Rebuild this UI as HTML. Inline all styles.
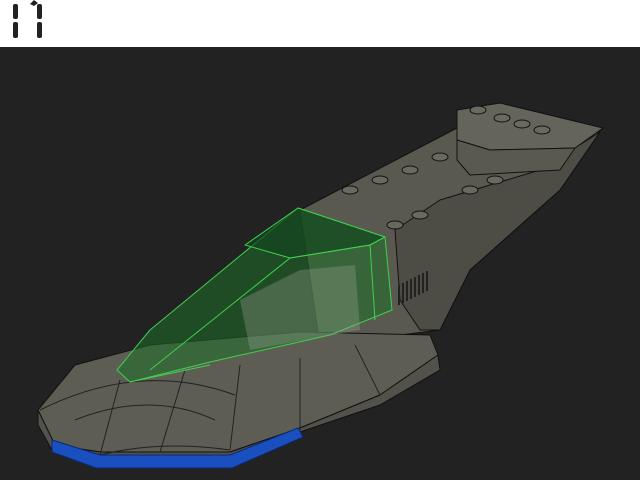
<!DOCTYPE html>
<html><head><style>
html,body{margin:0;padding:0;width:640px;height:480px;overflow:hidden;background:#222}
.top{position:absolute;left:0;top:0;width:640px;height:47px;background:#fff}
</style></head><body>
<div class="top">
<svg width="60" height="47" style="position:absolute;left:0;top:0">
<g fill="#222">
<rect x="13" y="4" width="5" height="15" rx="2"/>
<rect x="13" y="22" width="5" height="16" rx="2"/>
<rect x="37" y="4" width="5" height="15" rx="2"/>
<rect x="37" y="22" width="5" height="16" rx="2"/>
<polygon points="30,4 34,0 38,3 34,6"/>
</g></svg>
</div>
<svg width="640" height="480" style="position:absolute;left:0;top:0">
<g stroke="#111" stroke-width="1" stroke-linejoin="round">
<!-- rear hull -->
<polygon fill="#5a5950" points="300,210 457,128 600,132 560,190 470,270 440,330 320,345"/>
<polygon fill="#4e4d45" points="440,200 540,170 600,132 560,190 470,270 440,330 420,330 400,300 395,230"/>
<!-- rear block -->
<polygon fill="#65645b" points="457,110 500,103 603,128 575,148 490,150 457,140"/>
<polygon fill="#5a5950" points="457,140 490,150 575,148 560,170 470,175 457,160"/>
<!-- studs -->
<g fill="#6a695f">
<ellipse cx="478" cy="110" rx="8" ry="4"/><ellipse cx="502" cy="118" rx="8" ry="4"/>
<ellipse cx="522" cy="124" rx="8" ry="4"/><ellipse cx="542" cy="130" rx="8" ry="4"/>
<ellipse cx="440" cy="157" rx="8" ry="4"/><ellipse cx="410" cy="170" rx="8" ry="4"/>
<ellipse cx="380" cy="180" rx="8" ry="4"/><ellipse cx="350" cy="190" rx="8" ry="4"/>
<ellipse cx="495" cy="180" rx="8" ry="4"/><ellipse cx="470" cy="190" rx="8" ry="4"/>
<ellipse cx="420" cy="215" rx="8" ry="4"/><ellipse cx="395" cy="225" rx="8" ry="4"/>
<ellipse cx="330" cy="345" rx="8" ry="4"/><ellipse cx="300" cy="352" rx="8" ry="4"/>
</g>
<!-- front disk -->
<polygon fill="#5e5d54" points="38,410 75,365 150,345 300,332 430,335 438,355 380,395 300,428 230,452 100,452 55,445"/>
<polygon fill="#52514a" points="38,410 55,445 100,452 230,452 300,428 380,395 438,355 440,370 380,405 300,432 228,462 98,462 52,450 38,425"/>
<g fill="none" stroke="#222">
<path d="M40,410 Q140,360 235,395 M75,420 Q150,390 215,420 M120,380 L100,455 M185,370 L160,452 M240,365 L230,450 M300,358 L300,430 M355,345 L380,395 M100,455 Q160,440 230,450"/>
</g>
<!-- blue underside -->
<polygon fill="#1a4fc0" stroke="#0a2a70" points="52,440 100,455 230,455 298,428 303,437 232,468 96,468 52,452"/>
<!-- vent -->
<g stroke="#222" stroke-width="2"><path d="M399,285v20M403,283v20M407,281v20M411,279v20M415,277v20M419,275v20M423,273v20M427,271v20"/></g>
<!-- cockpit -->
<polygon fill="rgba(30,110,40,0.55)" stroke="#3fd050" points="117,370 150,330 298,208 385,237 392,310 330,335 210,362 130,382"/>
<polygon fill="rgba(20,70,30,0.7)" stroke="#3fd050" points="245,245 298,208 385,237 370,245 290,258"/>
<polygon fill="rgba(150,160,140,0.35)" stroke="none" points="240,300 300,270 355,265 360,330 250,350"/>
<path fill="none" stroke="#3fd050" d="M290,258 L150,370 M370,245 L385,237 M290,258 L370,245 L375,320 M130,382 L210,365"/>
</g>
</svg>
</body></html>
